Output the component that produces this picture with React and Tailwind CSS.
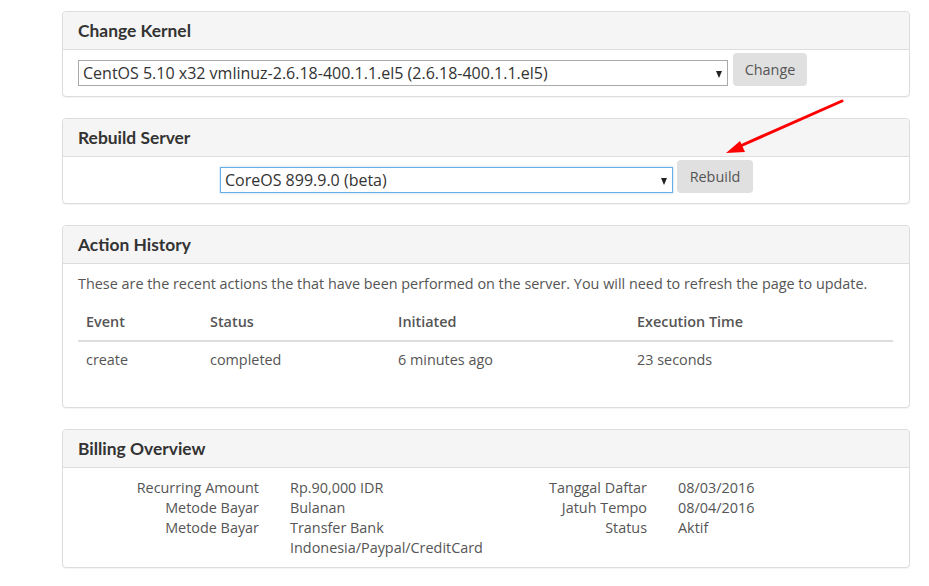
import React from "react";

function Panel({ title, children, bodyClass }) {
  return (
    <div className="rounded-[4px] border border-[#dddddd] bg-white shadow-[0_1px_1px_rgba(0,0,0,0.05)]">
      <div className="h-[38px] border-b border-[#dddddd] bg-[#f5f5f5] px-[15px] flex items-center rounded-t-[4px]">
        <h3 className="font-['Lato','Open_Sans',sans-serif] font-bold text-[17.4px] text-[#333333] leading-none">
          {title}
        </h3>
      </div>
      <div className={bodyClass}>{children}</div>
    </div>
  );
}

function KernelSelect() {
  return (
    <div className="relative mt-[7px] w-[650px] h-[26px] border border-[#a9a9a9] bg-white flex items-center pl-[4px] text-[16px] text-[#333333]">
      <span className="leading-none whitespace-nowrap">CentOS 5.10 x32 vmlinuz-2.6.18-400.1.1.el5 (2.6.18-400.1.1.el5)</span>
      <span className="absolute right-[5px] top-[10px] w-0 h-0 border-l-[3.5px] border-r-[3.5px] border-t-[7px] border-l-transparent border-r-transparent border-t-[#222222]" />
    </div>
  );
}

function RebuildSelect() {
  return (
    <div className="relative mt-[7px] w-[453px] h-[26px] border border-[#66afe9] shadow-[0_0_2px_rgba(102,175,233,0.6)] bg-white flex items-center pl-[4px] text-[16px] text-[#333333]">
      <span className="leading-none whitespace-nowrap">CoreOS 899.9.0 (beta)</span>
      <span className="absolute right-[5px] top-[10px] w-0 h-0 border-l-[3.5px] border-r-[3.5px] border-t-[7px] border-l-transparent border-r-transparent border-t-[#222222]" />
    </div>
  );
}

export default function App() {
  return (
    <div className="relative w-[929px] h-[586px] overflow-hidden bg-white text-[14.4px] text-[#555555] font-['Open_Sans','Liberation_Sans',sans-serif]">
      <div className="ml-[62px] mt-[11px] w-[848px] flex flex-col gap-[21px]">
        <Panel title="Change Kernel" bodyClass="px-[15px] pt-[3px] pb-[10px] flex items-start gap-[5px]">
          <KernelSelect />
          <div className="w-[74px] h-[33px] rounded-[4px] bg-[#e0e0e0] flex items-center justify-center text-[14.4px] text-[#555555]">
            Change
          </div>
        </Panel>

        <Panel title="Rebuild Server" bodyClass="pl-[157px] pt-[3px] pb-[10px] flex items-start gap-[4px]">
          <RebuildSelect />
          <div className="w-[76px] h-[33px] rounded-[4px] bg-[#e0e0e0] flex items-center justify-center text-[14.4px] text-[#555555]">
            Rebuild
          </div>
        </Panel>

        <Panel title="Action History" bodyClass="px-[15px] pt-[10px] pb-[10px]">
          <p className="leading-[20px] mb-[10px] whitespace-nowrap">
            These are the recent actions the that have been performed on the server. You will need to refresh the page to update.
          </p>
          <table className="w-[815px] mb-[19px] border-collapse">
            <thead>
              <tr className="border-b-2 border-[#dddddd]">
                <th className="w-[124px] text-left font-semibold px-[8px] py-[8px] leading-[20px]">Event</th>
                <th className="w-[188px] text-left font-semibold px-[8px] py-[8px] leading-[20px]">Status</th>
                <th className="w-[239px] text-left font-semibold px-[8px] py-[8px] leading-[20px]">Initiated</th>
                <th className="text-left font-semibold px-[8px] py-[8px] leading-[20px]">Execution Time</th>
              </tr>
            </thead>
            <tbody>
              <tr>
                <td className="px-[8px] py-[8px] leading-[20px]">create</td>
                <td className="px-[8px] py-[8px] leading-[20px]">completed</td>
                <td className="px-[8px] py-[8px] leading-[20px]">6 minutes ago</td>
                <td className="px-[8px] py-[8px] leading-[20px]">23 seconds</td>
              </tr>
            </tbody>
          </table>
        </Panel>

        <Panel title="Billing Overview" bodyClass="px-[15px] pt-[10px] pb-[9px] flex leading-[20px]">
          <div className="w-[408px] grid grid-cols-[181px_1fr] gap-x-[31px] content-start">
            <div className="text-right">Recurring Amount</div>
            <div>Rp.90,000 IDR</div>
            <div className="text-right">Metode Bayar</div>
            <div>Bulanan</div>
            <div className="text-right">Metode Bayar</div>
            <div>
              Transfer Bank
              <br />
              Indonesia/Paypal/CreditCard
            </div>
          </div>
          <div className="grid grid-cols-[161px_1fr] gap-x-[31px] content-start">
            <div className="text-right">Tanggal Daftar</div>
            <div>08/03/2016</div>
            <div className="text-right">Jatuh Tempo</div>
            <div>08/04/2016</div>
            <div className="text-right">Status</div>
            <div>Aktif</div>
          </div>
        </Panel>
      </div>

      <svg className="absolute left-0 top-0 pointer-events-none" width="929" height="586" viewBox="0 0 929 586">
        <line x1="842" y1="101" x2="738" y2="147" stroke="#ff0000" strokeWidth="3" strokeLinecap="round" />
        <polygon points="726,153 740,141 745,152" fill="#ff0000" />
      </svg>
    </div>
  );
}
